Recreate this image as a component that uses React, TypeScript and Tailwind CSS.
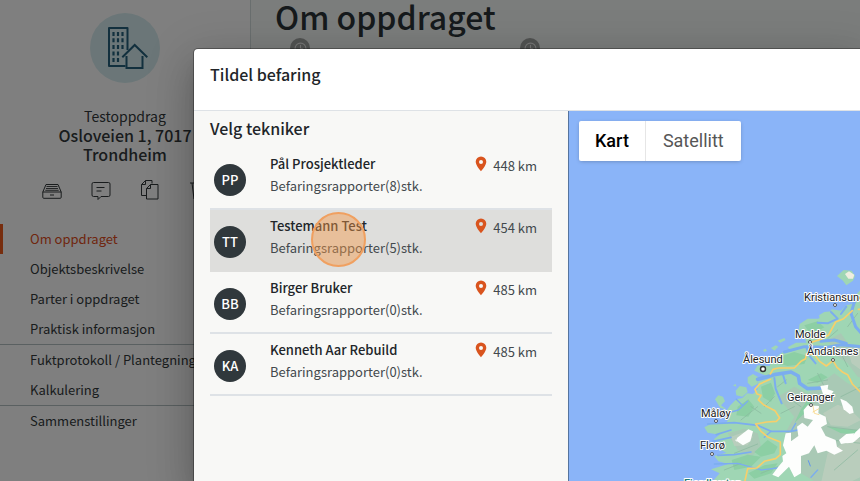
import { Clock3 } from "lucide-react";
import { clsx } from "clsx";

const navGroups = [
  ["Om oppdraget", "Objektsbeskrivelse", "Parter i oppdraget", "Praktisk informasjon"],
  ["Fuktprotokoll / Plantegning", "Kalkulering"],
  ["Sammenstillinger"],
];

const technicians = [
  { initials: "PP", name: "Pål Prosjektleder", reports: 8, distance: "448 km" },
  { initials: "TT", name: "Testemann Test", reports: 5, distance: "454 km" },
  { initials: "BB", name: "Birger Bruker", reports: 0, distance: "485 km" },
  { initials: "KA", name: "Kenneth Aar Rebuild", reports: 0, distance: "485 km" },
];

const activeItem = "Om oppdraget";
const selectedTechnician = "TT";

const places = [
  { name: "Kristiansund", x: 235, y: 190, dotX: 266, dotY: 194 },
  { name: "Molde", x: 226, y: 227, dotX: 241, dotY: 231 },
  { name: "Åndalsnes", x: 238, y: 244, dotX: 264, dotY: 249 },
  { name: "Ålesund", x: 174, y: 252, dotX: 194, dotY: 258, large: true },
  { name: "Geiranger", x: 218, y: 290, dotX: 242, dotY: 294 },
  { name: "Måløy", x: 132, y: 306, dotX: 147, dotY: 310 },
  { name: "Florø", x: 131, y: 338, dotX: 143, dotY: 343 },
];

function PropertyIcon() {
  return (
    <svg viewBox="0 0 70 70" className="size-[70px]" fill="none" stroke="#25607c" strokeWidth="2">
      <circle cx="35" cy="35" r="35" fill="#d6edf0" stroke="none" />
      <path d="M35.5 53H19V15h18.5v22" strokeLinejoin="round" />
      <path
        d="M23.5 19v4M28 19v4M32.5 19v4M23.5 25.3v4M28 25.3v4M32.5 25.3v4M23.5 32v4M28 32v4M32.5 32v4M23.5 38.5v4M28 38.5v4M23.5 45v4M28 45v4"
        strokeWidth="2.2"
      />
      <path d="M32.3 44.3 44.7 32l12.6 12.3" />
      <path d="M36.5 43v12h16V43" />
    </svg>
  );
}

function TrayIcon() {
  return (
    <svg viewBox="0 0 20 20" className="size-5" fill="none" stroke="currentColor">
      <path d="M.8 12 4 4.5h12l3.2 7.5v5.3q0 1-1 1H1.8q-1 0-1-1ZM.8 12h18.4" />
      <path d="M4.5 6.5h11M4 8.5h12M3.3 10.3h13.4" strokeWidth=".9" />
      <path d="M8 15h4" />
    </svg>
  );
}

function CommentIcon() {
  return (
    <svg viewBox="0 0 20 20" className="size-5" fill="none" stroke="currentColor" strokeLinejoin="round">
      <path d="M2.5 2.5h15q1.5 0 1.5 1.5v11q0 1.5-1.5 1.5H10l-3 3v-3H2.5Q1 16.5 1 15V4q0-1.5 1.5-1.5Z" />
      <path d="M5.5 7.5h8M5.5 11h5" />
    </svg>
  );
}

function CopyIcon() {
  return (
    <svg viewBox="0 0 20 20" className="size-5" fill="none" stroke="currentColor" strokeLinejoin="round">
      <path d="M6.5 15.5h-5V4.500l4-4H12v3M1.500 4.500h4v-4" />
      <path d="M10.5 4.500h7.500v14.500H6.500V8.500ZM6.500 8.500h4v-4" />
    </svg>
  );
}

function TrashIcon() {
  return (
    <svg viewBox="0 0 20 20" className="size-5" fill="none" stroke="currentColor">
      <path d="M1 3h18M3 3l2 16h10l2-16M7 6l1 10M13 6l-1 10M10 6v10" />
    </svg>
  );
}

function PinIcon() {
  return (
    <svg viewBox="0 0 12 16" className="h-4 w-3">
      <path
        fill="#d9541e"
        fillRule="evenodd"
        d="M6 .5A5.3 5.3 0 0 0 .7 5.8C.7 9.5 6 15.3 6 15.3s5.3-5.8 5.3-9.5A5.3 5.3 0 0 0 6 .5Zm0 3.4a2 2 0 1 1 0 4 2 2 0 0 1 0-4Z"
      />
    </svg>
  );
}

function CoastMap() {
  return (
    <svg
      viewBox="0 0 292 370"
      preserveAspectRatio="xMinYMin slice"
      className="absolute inset-0 size-full bg-[#8ab4f8]"
      aria-label="Kart"
    >
      <g transform="translate(92 129) scale(0.3333)" strokeLinejoin="round" strokeLinecap="round">
        {/* Land */}
        <g fill="#9fd6b4">
          <path d="M640 145 596 152 582 168 584 190 556 196 540 212 512 208 500 228 470 236 440 236 416 252 412 276 430 290 436 308 405 308 380 322 392 334 370 334 352 346 330 362 326 378 290 376 280 392 312 406 330 414 292 424 290 448 276 462 258 460 244 474 226 478 208 496 190 522 206 530 196 548 150 552 130 562 140 578 176 584 158 598 190 612 176 628 196 638 160 648 172 664 202 672 150 688 176 700 150 730H640Z" />
          <path d="M528 108 548 90 572 92 582 108 576 122 556 136 546 122Z" />
          <path d="M474 226 490 216 512 214 514 232 496 246 478 242Z" />
          <path d="M260 412 276 402 292 412 290 432 272 440 260 428Z" />
          <path d="M224 452 236 438 256 442 260 456 244 470 226 466Z" />
          <path d="M162 478 172 466 186 470 192 484 180 496 196 508 178 504Z" />
          <path d="M330 324l14-8 8 4-12 12zM350 302l20-8 4 6-16 8zM306 330l8-4 4 6-8 4zM216 436l8-4 2 8z" />
        </g>
        {/* Highlands */}
        <g fill="#a9c9b5">
          <path d="M350 470 400 440 440 462 480 430 520 400 560 430 640 470V730H470L420 700 380 640 372 580 400 530Z" />
          <path d="M500 300 540 280 560 310 640 330V430L590 410 560 370 530 350Z" />
          <path d="M200 580 250 566 290 580 300 620 270 650 230 630Z" />
        </g>
        <g fill="#c1d0c0" opacity=".7">
          <path d="M486 520 530 494 566 508 600 540 560 560 510 556Z" />
          <path d="M500 640 560 600 640 590V690L560 730H480Z" />
          <path d="M560 330 600 320V390L572 370Z" />
          <path d="M210 590 250 576 276 590 260 616 220 618Z" />
        </g>
        <g fill="#8ccfa4">
          <path d="M350 352 400 336 440 348 430 372 380 378 350 370Z" />
          <path d="M300 440 330 428 342 460 330 486 306 472Z" />
          <path d="M230 500 262 478 280 500 262 530 226 526Z" />
          <path d="M430 256 470 244 490 262 450 284Z" />
          <path d="M212 660 260 644 300 650 270 680 220 690Z" />
          <path d="M420 508 440 480 464 470 440 510 400 550Z" />
          <path d="M500 560 540 566 600 572 610 584 540 580ZM440 420 480 400 500 412 470 428Z" />
          <path d="M320 600 350 620 340 640 300 650 280 636ZM262 700 310 676 350 670 330 700 280 716Z" />
        </g>
        <g fill="none" stroke="#8bb9a0" strokeWidth="3" opacity=".7">
          <path d="M310 500 340 470M360 520 400 500M220 640 290 612M300 700 350 680M540 470 600 440M500 560 600 572M440 430 500 420M520 690 590 630M530 270 500 296M240 540 290 500M470 400 490 440M560 380 540 340" />
          <path d="M376 470 420 500M510 600 600 610M560 260 590 220M350 440 376 420M270 500 300 520M190 690 240 670" />
        </g>
        {/* Fjords */}
        <g fill="none" stroke="#7badef">
          <path d="M370 336 430 320 500 322 540 314 600 320M582 180 570 220 584 260 610 290M480 304 520 300 556 310" strokeWidth="9" />
          <path d="M290 418 340 404 390 396 412 408 416 430 440 446 486 444" strokeWidth="11" />
          <path d="M340 414 344 446 362 490M366 404 374 430M436 320 444 346 464 370" strokeWidth="6" />
          <path d="M140 552 220 548 290 556 330 574 390 574 420 568M166 584 210 570M156 604 210 592M170 646 220 644 270 636" strokeWidth="5" />
          <path d="M226 478 244 496M196 520 232 510 260 484M330 574 310 592M390 574 404 550M160 672 230 670 300 690 350 684M450 712 470 690" strokeWidth="4" />
          <path d="M510 216 530 236 500 250 470 248M556 200 540 222" strokeWidth="6" />
        </g>
        {/* Snow */}
        <g fill="#fdfefd">
          <path d="M478 438 502 434 500 448 518 454 510 464 486 462Z" />
          <path d="M538 476 556 484 574 500 578 518 566 522 548 508Z" />
          <path d="M428 510 440 496 474 498 472 520 494 530 498 552 480 562 494 588 524 600 528 620 546 632 520 644 496 632 470 640 460 616 444 640 420 648 420 700 400 712 384 680 352 712 334 704 352 680 366 664 364 648 376 640 366 616 374 580 390 578 390 604 412 588 408 560 424 548 440 560 456 540 430 534Z" />
          <path d="M534 600 556 582 580 580 560 608 540 612ZM556 610 584 576 610 552V580L576 608Z" />
          <path d="M228 594 262 568 276 574 268 604 246 616 226 602Z" />
          <path d="M222 600 226 598 228 606Z" />
          <path d="M552 102 564 94 580 104 576 116 562 116Z" fill="#efeee0" />
        </g>
        <path d="M442 662 448 678" stroke="#5f95ec" strokeWidth="3" />
        {/* Roads */}
        <g fill="none" stroke="#f7cf6b" strokeWidth="5">
          <path d="M328 402 336 388 352 384 400 384 420 364 434 356 436 342 460 344 476 364 496 378 516 362 528 382 544 396 560 404 574 432 600 458" />
          <path d="M448 308 480 298 502 286 524 246 548 236 574 212M592 208H610" />
          <path d="M328 418 296 432 282 448 288 462 300 466 292 480 310 496 342 512 356 534 346 544 318 546 284 552 300 574 322 592 358 606 358 644 344 656 310 664 288 684 260 686 252 722" />
          <path d="M456 498 460 520 474 524M456 516 474 506" strokeWidth="2" />
        </g>
      </g>
      {/* Place names */}
      <g
        className="font-['Roboto',sans-serif] text-[11px]"
        fill="#202124"
        stroke="#fff"
        strokeWidth="2"
        strokeLinejoin="round"
        paintOrder="stroke"
      >
        {places.map((place) => (
          <g key={place.name}>
            <circle
              cx={place.dotX}
              cy={place.dotY}
              r={place.large ? 2.5 : 1.5}
              fill="#fff"
              stroke="#333"
              strokeWidth={place.large ? 1.4 : 0.8}
              paintOrder="normal"
            />
            <text x={place.x} y={place.y}>{place.name}</text>
          </g>
        ))}
        <text x="115" y="376" fill="#1d7d74" className="font-medium">Fjordkysten</text>
      </g>
    </svg>
  );
}

function Sidebar() {
  return (
    <aside className="w-[251px] shrink-0 border-r border-[#d3dcdc] bg-white">
      <div className="flex justify-center pt-[13px]">
        <PropertyIcon />
      </div>
      <div className="px-10 pt-6 text-center">
        <p className="text-sm leading-[19px]">Testoppdrag</p>
        <p className="text-base leading-[19px] font-medium">Osloveien 1, 7017 Trondheim</p>
      </div>
      <div className="flex justify-center gap-[29px] pt-4 pb-6">
        <button aria-label="Arkiv"><TrayIcon /></button>
        <button aria-label="Kommentarer"><CommentIcon /></button>
        <button aria-label="Kopier"><CopyIcon /></button>
        <button aria-label="Slett"><TrashIcon /></button>
      </div>
      <nav className="divide-y divide-[#b4c0c2]">
        {navGroups.map((group) => (
          <ul key={group[0]}>
            {group.map((item) => (
              <li key={item}>
                <a
                  href="#"
                  className={clsx(
                    "block border-l-[3px] pl-[27px] text-[13px] leading-[30px]",
                    item === activeItem ? "border-[#ef5a1c] text-[#e04c20]" : "border-transparent"
                  )}
                >
                  {item}
                </a>
              </li>
            ))}
          </ul>
        ))}
      </nav>
    </aside>
  );
}

export default function App() {
  return (
    <div className="relative h-screen overflow-hidden font-['Noto_Sans_CJK_SC',sans-serif] text-[#33393b]">
      <div className="flex h-full">
        <Sidebar />
        <main className="min-w-0 flex-1 bg-[#f7fbf9] pl-6">
          <h1 className="pb-[6px] text-[32px] leading-8 font-medium text-[#2c3539]">Om oppdraget</h1>
          <div className="flex gap-[210px] pl-[15px]">
            {["Start", "Befaring"].map((step) => (
              <button
                key={step}
                aria-label={step}
                className="flex size-5 items-center justify-center rounded-full bg-[#a3a6a5] text-[#eceeed]"
              >
                <Clock3 size={13} />
              </button>
            ))}
          </div>
        </main>
      </div>

      {/* Backdrop */}
      <div className="absolute inset-0 bg-black/50" />

      <div
        role="dialog"
        aria-labelledby="dialog-title"
        className="absolute top-[49px] right-0 bottom-0 left-[194px] flex flex-col overflow-hidden rounded-tl bg-white text-[#212529] shadow-[0_11px_15px_-7px_rgba(0,0,0,0.2),0_24px_38px_3px_rgba(0,0,0,0.14),0_9px_46px_8px_rgba(0,0,0,0.12),0_0_0_1px_rgba(0,0,0,0.3)]"
      >
        <header className="h-[62px] shrink-0 border-b border-[#dee2e6] px-4 pt-[15px]">
          <h2 id="dialog-title" className="text-base leading-5 font-medium">Tildel befaring</h2>
        </header>
        <div className="flex min-h-0 flex-1">
          <section className="w-[374px] shrink-0 bg-[#f8f8f6] px-4 pt-[7px]">
            <h3 className="pb-[10px] text-base leading-5 font-medium">Velg tekniker</h3>
            <ul>
              {technicians.map((tech) => {
                const selected = tech.initials === selectedTechnician;
                return (
                  <li key={tech.initials} className="relative">
                    <button
                      className={clsx(
                        "flex h-[62px] w-full items-start border-b-2 pr-[15px] pl-1 text-left",
                        selected ? "border-[#dededc] bg-[#dededc]" : "border-[#dee2e6]"
                      )}
                    >
                      <span className="mt-4 flex size-8 items-center justify-center rounded-full bg-[#30383c] text-[13px] leading-5 font-medium text-white">
                        {tech.initials}
                      </span>
                      <span className="ml-6 flex-1 pt-[5px] text-[13px] leading-[22px]">
                        <span className="block font-medium">{tech.name}</span>
                        <span className="block text-[#43494d]">Befaringsrapporter({tech.reports})stk.</span>
                      </span>
                      <span className="flex gap-[6px] pt-2 text-[13px] leading-5 text-[#43494d]">
                        <PinIcon />
                        {tech.distance}
                      </span>
                    </button>
                    {selected && (
                      <span className="pointer-events-none absolute top-[2px] left-[101px] size-[55px] rounded-full border-2 border-[#f0a060] bg-[#f5994a]/45" />
                    )}
                  </li>
                );
              })}
            </ul>
          </section>
          <section className="relative flex-1 overflow-hidden border-l border-[#56749f]">
            <CoastMap />
            <div className="relative m-[10px] inline-flex h-10 rounded-xs bg-white font-['Roboto',sans-serif] text-lg shadow-[0_1px_4px_-1px_rgba(0,0,0,0.3)]">
              <button className="border-r border-[#e6e6e6] px-4 font-medium text-black">Kart</button>
              <button className="px-[17px] text-[#565656]">Satellitt</button>
            </div>
          </section>
        </div>
      </div>
    </div>
  );
}
